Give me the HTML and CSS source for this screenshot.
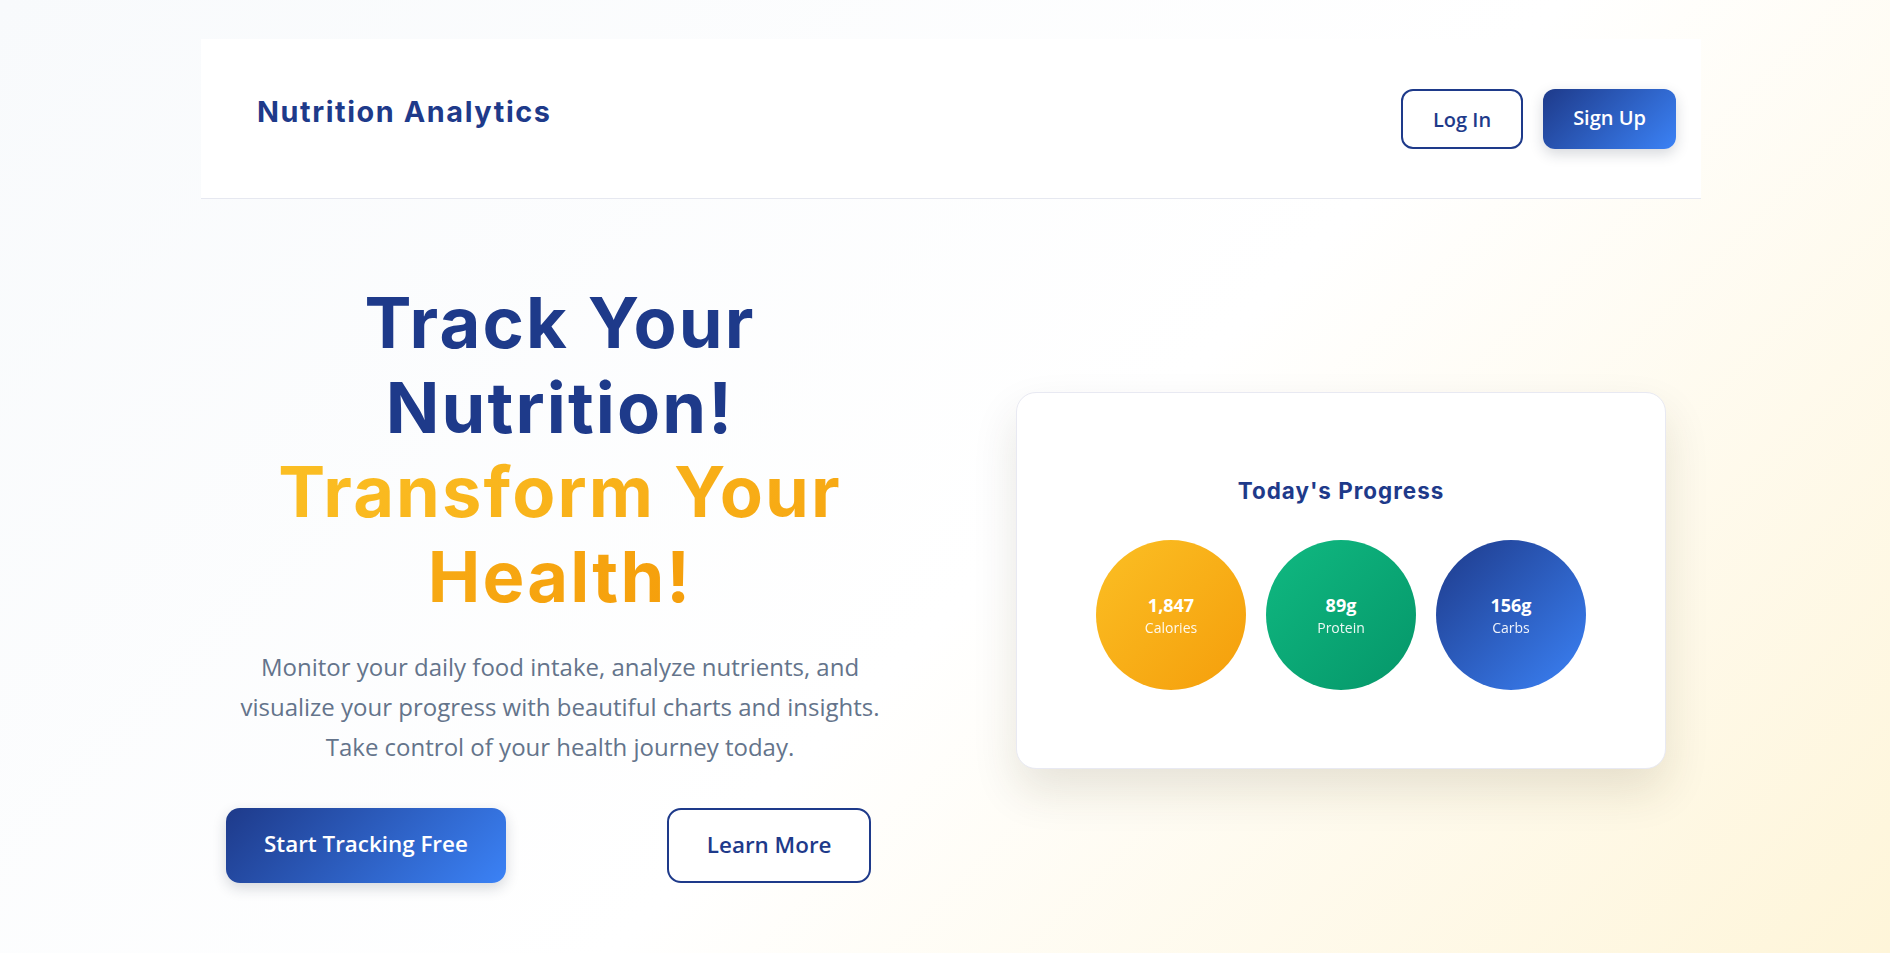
FILE: index.html
```html
<!DOCTYPE html>
<html lang="en">
<head>
<meta charset="utf-8">
<title>Nutrition Analytics</title>
<link rel="stylesheet" href="styles.css">
</head>
<body>
<div class="page">
  <header class="site-header">
    <div class="logo">Nutrition Analytics</div>
    <nav class="auth">
      <a class="btn btn-outline btn-sm" href="#">Log In</a>
      <a class="btn btn-primary btn-sm" href="#">Sign Up</a>
    </nav>
  </header>

  <main class="hero">
    <section class="hero-text">
      <h1 class="hero-title">Track Your<br>Nutrition!<br><span class="accent">Transform Your<br>Health!</span></h1>
      <p class="hero-desc">Monitor your daily food intake, analyze nutrients, and visualize your progress with beautiful charts and insights. Take control of your health journey today.</p>
      <div class="hero-actions">
        <a class="btn btn-primary btn-lg" href="#">Start Tracking Free</a>
        <a class="btn btn-outline btn-lg" href="#">Learn More</a>
      </div>
    </section>

    <section class="hero-visual">
      <div class="progress-card">
        <h2 class="card-title">Today's Progress</h2>
        <div class="stats">
          <div class="stat stat-cal"><span class="stat-value">1,847</span><span class="stat-label">Calories</span></div>
          <div class="stat stat-pro"><span class="stat-value">89g</span><span class="stat-label">Protein</span></div>
          <div class="stat stat-carb"><span class="stat-value">156g</span><span class="stat-label">Carbs</span></div>
        </div>
      </div>
    </section>
  </main>
</div>
</body>
</html>
```

FILE: styles.css
```css
* { box-sizing: border-box; }

html, body {
  margin: 0;
  padding: 0;
  height: 100%;
}

body {
  font-family: "Open Sans", "Noto Sans", sans-serif;
  background: linear-gradient(135deg, #f8fafc 0%, #ffffff 55%, #fef5d9 100%);
  min-height: 953px;
  overflow: hidden;
}

.page {
  padding: 39px 189px 0 201px;
}

.site-header {
  display: flex;
  align-items: center;
  justify-content: space-between;
  background: #ffffff;
  padding: 50px 25px 49px 56px;
  border-bottom: 1px solid #e6e8f0;
}

.logo {
  font-family: Inter, "DejaVu Sans", sans-serif;
  font-weight: 700;
  font-size: 28.8px;
  letter-spacing: 0.055em;
  color: #1e3a8a;
  line-height: 1.2;
  margin-bottom: 14px;
}

.auth {
  display: flex;
  gap: 20px;
}

.btn {
  display: inline-block;
  text-decoration: none;
  font-family: "Open Sans", sans-serif;
  font-weight: 600;
  line-height: 1.362;
  white-space: nowrap;
}

.btn-sm {
  font-size: 20px;
  padding: 15px 30px;
  border-radius: 12px;
}

.btn-lg {
  font-size: 22.4px;
  padding: 21px 38px;
  border-radius: 14px;
}

.btn-primary {
  color: #ffffff;
  background: linear-gradient(135deg, #1e3a8a 0%, #3b82f6 100%);
  border: 0;
  box-shadow: 0 5px 14px rgba(30, 41, 59, 0.18);
}

.btn-outline {
  color: #1e3a8a;
  background: #ffffff;
  border: 2px solid #1e3a8a;
}

.btn-outline.btn-sm { padding: 14.5px 30px; }
.btn-outline.btn-lg { padding: 20px 38px; }

.hero {
  display: grid;
  grid-template-columns: 1fr 1fr;
  column-gap: 64px;
  align-items: center;
  padding-top: 82px;
}

.hero-text {
  text-align: center;
}

.hero-title {
  margin: 0 0 28px;
  font-family: Inter, "DejaVu Sans", sans-serif;
  font-weight: 700;
  font-size: 70.4px;
  line-height: 1.2;
  letter-spacing: 0.03em;
  color: #1e3a8a;
}

.accent {
  background: linear-gradient(135deg, #fbbf24 0%, #f59e0b 100%);
  -webkit-background-clip: text;
  background-clip: text;
  color: transparent;
  -webkit-box-decoration-break: slice;
}

.hero-desc {
  margin: 0 auto 41px;
  max-width: 660px;
  font-size: 24px;
  line-height: 40px;
  color: #64748b;
}

.hero-actions {
  display: flex;
  gap: 161px;
  padding-left: 25px;
}

.hero-visual {
  display: flex;
  justify-content: center;
  padding-right: 2px;
}

.progress-card {
  width: 650px;
  margin-bottom: 3px;
  background: #ffffff;
  border: 1px solid #e8e9f2;
  border-radius: 20px;
  padding: 84px 40px 78px;
  text-align: center;
  box-shadow: 0 22px 45px rgba(60, 50, 20, 0.12);
}

.card-title {
  margin: 0 0 36px;
  font-family: Inter, "DejaVu Sans", sans-serif;
  font-weight: 700;
  font-size: 22.4px;
  line-height: 27px;
  letter-spacing: 0.045em;
  color: #1e3a8a;
}

.stats {
  display: flex;
  justify-content: center;
  gap: 20px;
}

.stat {
  width: 150px;
  height: 150px;
  border-radius: 50%;
  display: flex;
  flex-direction: column;
  align-items: center;
  justify-content: center;
  color: #ffffff;
}

.stat-cal { background: linear-gradient(135deg, #fbbf24 0%, #f59e0b 100%); }
.stat-pro { background: linear-gradient(135deg, #10b981 0%, #059669 100%); }
.stat-carb { background: linear-gradient(135deg, #1e3a8a 0%, #3b82f6 100%); }

.stat-value {
  font-weight: 700;
  font-size: 18px;
  line-height: 1.4;
}

.stat-label {
  font-size: 14px;
  line-height: 1.4;
  opacity: 0.92;
}
```
